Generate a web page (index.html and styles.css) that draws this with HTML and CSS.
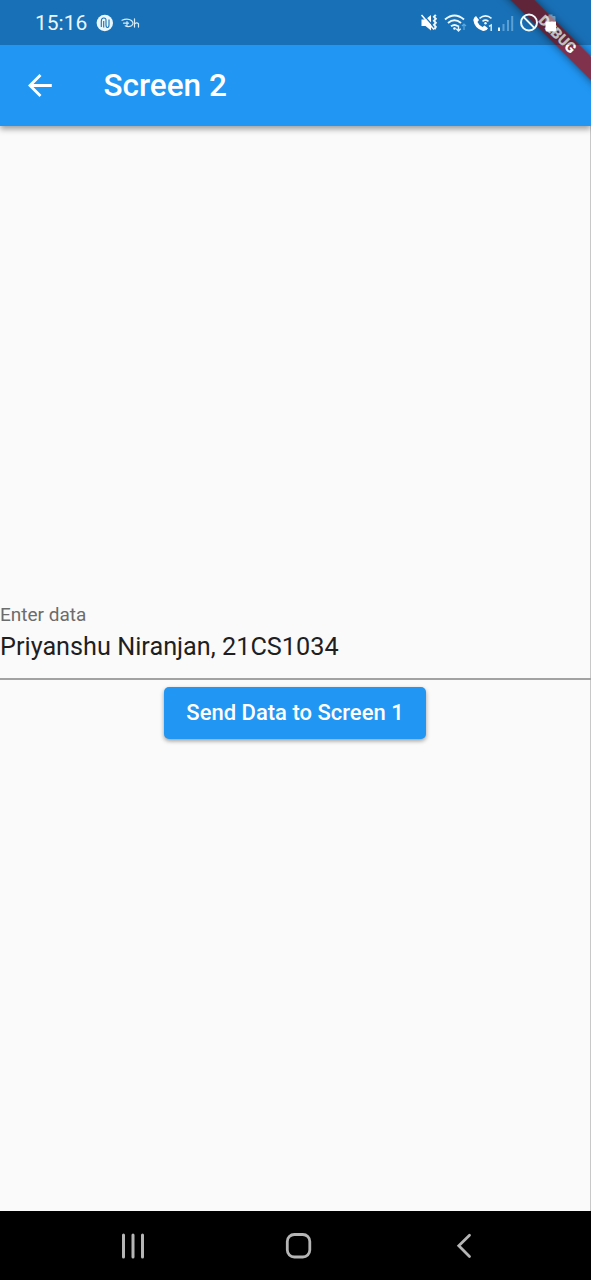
FILE: index.html
```
<!DOCTYPE html>
<html lang="en">
<head>
<meta charset="utf-8">
<title>Screen 2</title>
<link rel="stylesheet" href="styles.css">
</head>
<body>
<div class="phone">
  <div class="debug-clip"><div class="debug-banner">DEBUG</div></div>
  <div class="status-bar">
    <span class="clock">15:16</span>
    <svg class="notifications" width="46" height="20" viewBox="0 0 46 20" fill="none">
      <circle cx="8.800" cy="10" r="8.200" fill="#e9f6fb"/>
      <path d="M5.300 14V8.500Q5.300 5 7.800 5t2.200 3v4q0 2.500 1.500 2.500T13 12V6.500M7.700 8v6.500" stroke="#1970b6" stroke-width="1.100"/>
      <g stroke="#d8edf8" stroke-width="1.200" stroke-linecap="round" stroke-linejoin="round"><path d="M26 7.200q5.500-2.500 9.500.3 3 3 0 5.300-3.500 1.700-6.300 0M31 8.500v4M27.500 10.200h5"/><path d="M38.500 5.800v8.300m0-3q2-2.300 4-.5v3.500"/></g>
    </svg>
    <svg class="system-icons" width="140" height="24" viewBox="0 0 140 24" fill="none">
      <path d="M1.500 8.500H5.500l5.500-4.500v15.500L5.500 15H1.500z" fill="#fff"/>
      <path d="M2.500 3l13 14.500" stroke="#1970b6" stroke-width="1.300"/>
      <path d="M1.500 4L14 18.500" stroke="#fff" stroke-width="1.500"/>
      <path d="M15.800 3.800l-1.800 2 1.800 2-1.800 2 1.800 2-1.800 2 1.800 2-1.300 2.500" stroke="#f0f8fc" stroke-width="2"/>
      <path d="M25 8.500q9.500-8 19 0M28 12q6.500-5.500 13 0M31 15.300q3.500-2.800 7 0" stroke="#eef8fd" stroke-width="1.900"/>
      <circle cx="34.500" cy="17.500" r="1.300" fill="#fff"/>
      <path d="M38.500 14.500v5.500m-2.200-2.200 2.200 2.200 2.200-2.200" stroke="#e5f3fb" stroke-width="1.400"/>
      <path d="M44 19v-6m-2 2 2-2 2 2" stroke="#5fa8dd" stroke-width="1.200"/>
      <path d="M56 5 59 9 57.500 11q1.500 3.500 5 5l2-1.500 3.500 2.700q-1.500 3.300-5 2.800Q54.500 17.500 53.300 9q.3-2.500 2.700-4z" fill="#fff"/>
      <path d="M59.500 7.300q6-4.800 12 0M62.500 10.300q3-2.300 6 0" stroke="#eef8fd" stroke-width="1.600"/>
      <circle cx="65.500" cy="12.300" r="1.200" fill="#fff"/>
      <path d="M69 15.300 71.200 14v6" stroke="#e0f0fa" stroke-width="1.400"/>
      <path d="M79 16.500V20" stroke="#e8f5fc" stroke-width="2"/>
      <path d="M83.500 13v7M88 9v11M92.200 5v15" stroke="#5b9fd3" stroke-width="2"/>
      <circle cx="109" cy="11.500" r="8" stroke="#f0fafd" stroke-width="2"/>
      <path d="m103.500 5.900 11 11.200" stroke="#f0fafd" stroke-width="2"/>
      <path d="M125.500 6q0-1 1-1h2V3.500h4V5h2q1 0 1 1v4.500h-10z" fill="#fff" fill-opacity=".38"/>
      <path d="M125.500 10.500h10.500V19q0 1.500-1.500 1.500H127q-1.500 0-1.500-1.500z" fill="#fff"/>
    </svg>
  </div>
  <header class="app-bar">
    <svg class="back" width="24" height="24" viewBox="0 0 24 24" fill="none" stroke="#fff" stroke-width="2.800"><path d="M12.500 1 2 11.500 12.500 22M2 11.500h21.800"/></svg>
    <h1 class="title">Screen 2</h1>
  </header>
  <main class="content">
    <div class="field">
      <label class="label">Enter data</label>
      <div class="value">Priyanshu Niranjan, 21CS1034</div>
    </div>
    <button class="send">Send Data to Screen 1</button>
  </main>
  <nav class="nav-bar">
    <svg width="591" height="69" viewBox="0 0 591 69" fill="none" stroke="#b5b5b5">
      <path d="M123.500 24v22M133 24v22M142.500 24v22" stroke-width="3" stroke-linecap="round"/>
      <rect x="287.300" y="23.500" width="22.500" height="22.500" rx="7" stroke-width="2.800"/>
      <path d="M469.500 24.200 458.800 34.800 469.500 45.500" stroke-width="2.800" stroke-linecap="round"/>
    </svg>
  </nav>
</div>
</body>
</html>
```
FILE: styles.css
```
body { margin: 0; font-family: Roboto, "Liberation Sans", sans-serif; }
.phone {
  position: relative;
  width: 591px;
  height: 1280px;
  display: flex;
  flex-direction: column;
  overflow: hidden;
  background: #fafafa;
}
.status-bar {
  position: relative;
  z-index: 4;
  height: 45px;
  flex: none;
  box-sizing: border-box;
  display: flex;
  align-items: center;
  padding: 0 31px 0 35px;
  background: rgba(0, 0, 0, .25);
}
.clock { color: #eaf6fc; font-size: 21px; line-height: 26px; width: 61px; }
.system-icons { margin-left: auto; }
.app-bar {
  position: relative;
  z-index: 1;
  flex: none;
  height: 126px;
  margin-top: -45px;
  padding: 45px 0 0 28px;
  box-sizing: border-box;
  display: flex;
  align-items: center;
  background: #2196f3;
  box-shadow: 0 3px 6px rgba(0, 0, 0, .38);
}
.title {
  margin: 0 0 0 51.500px;
  color: #fff;
  font-size: 31.500px;
  font-weight: 500;
  line-height: 38px;
}
.debug-clip {
  position: absolute;
  z-index: 3;
  top: 0;
  right: 0;
  width: 100px;
  height: 100px;
  overflow: hidden;
}
.debug-banner {
  position: absolute;
  left: -14.500px;
  top: 25.900px;
  width: 160px;
  height: 17.200px;
  transform: rotate(45deg);
  background: rgba(136, 42, 62, .93);
  box-shadow: 0 0 9px rgba(0, 0, 0, .5);
  color: #fff;
  font-size: 14.600px;
  font-weight: 900;
  line-height: 17.200px;
  text-align: center;
}
.content {
  flex: 1;
  display: flex;
  flex-direction: column;
  align-items: center;
  padding-top: 478px;
  box-shadow: inset -1px 0 #c8c8c8;
}
.field {
  align-self: stretch;
  height: 76px;
  box-sizing: border-box;
  border-bottom: 2px solid #a2a2a2;
}
.label { display: block; color: #6c6c6c; font-size: 19px; line-height: 22px; }
.value { margin-top: 6px; color: #1f1f1f; font-size: 25.250px; line-height: 30px; }
.send {
  width: 262px;
  height: 52px;
  margin: 7px 1px 0 0;
  padding: 0;
  border: 0;
  border-radius: 5px;
  background: #2196f3;
  box-shadow: 0 2px 4px rgba(0, 0, 0, .38);
  color: #fff;
  font: 500 22px/52px Roboto, sans-serif;
}
.nav-bar { flex: none; height: 69px; background: #000; }
```
